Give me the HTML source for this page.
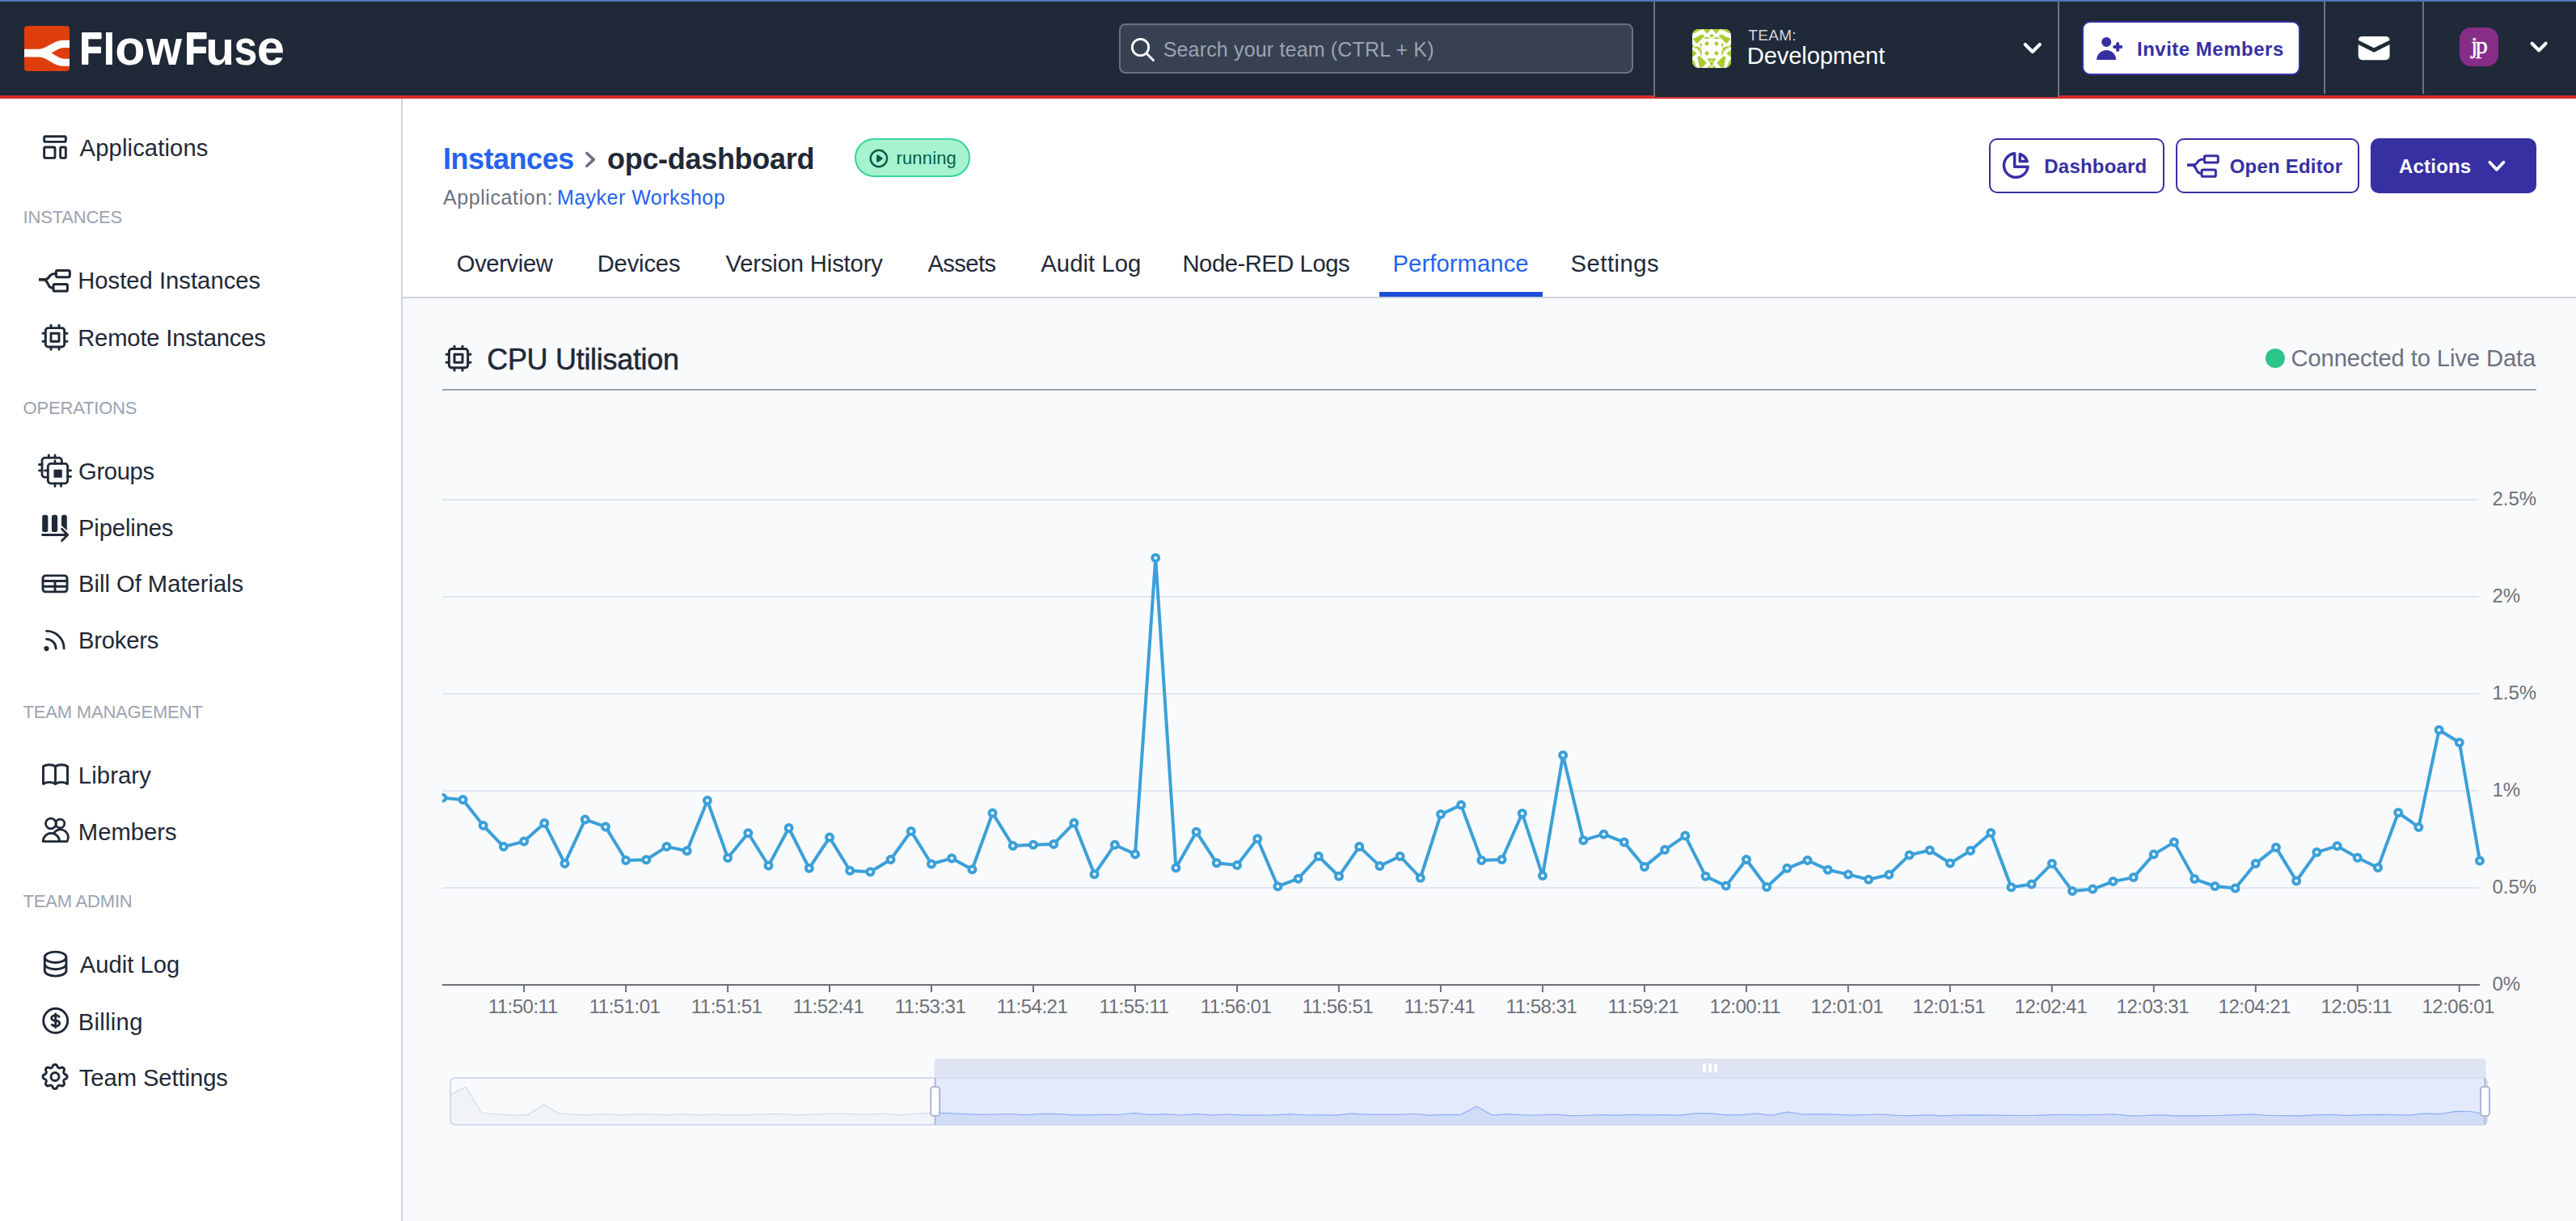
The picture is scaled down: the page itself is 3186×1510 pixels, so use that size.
<!DOCTYPE html>
<html><head><meta charset="utf-8"><title>FlowFuse - opc-dashboard</title>
<style>
html,body{margin:0;padding:0;width:3186px;height:1510px;overflow:hidden;background:#f9fafb;font-family:"Liberation Sans",sans-serif;}
.t{position:absolute;white-space:nowrap;line-height:1;}
.abs{position:absolute;}
svg{position:absolute;left:0;top:0;overflow:visible;}
</style></head><body>
<div class="abs" style="left:0;top:0;width:3186px;height:118px;background:#1f2937"></div>
<div class="abs" style="left:0;top:0;width:3186px;height:2px;background:#4a7db8"></div>
<div class="abs" style="left:0;top:118px;width:3186px;height:4px;background:#d92b2b"></div>
<div class="abs" style="left:0;top:122px;width:496px;height:1388px;background:#ffffff"></div>
<div class="abs" style="left:496px;top:122px;width:2px;height:1388px;background:#d1d5db"></div>
<div class="abs" style="left:498px;top:122px;width:2688px;height:245px;background:#ffffff"></div>
<div class="abs" style="left:498px;top:367px;width:2688px;height:2px;background:#d1d5db"></div>
<div class="abs" style="left:1384px;top:29px;width:636px;height:62px;box-sizing:border-box;background:#374151;border:2px solid #6b7280;border-radius:8px"></div>
<div class="t " style="left:1438.7px;top:48.7px;font-size:25px;color:#9ca3af;font-weight:400;letter-spacing:0.17px;">Search your team (CTRL + K)</div>
<div class="abs" style="left:2047px;top:118px;width:498px;height:2px;background:#1f2937"></div>
<div class="abs" style="left:2045px;top:2px;width:2px;height:118px;background:#6b7280"></div>
<div class="abs" style="left:2545px;top:2px;width:2px;height:118px;background:#6b7280"></div>
<div class="abs" style="left:2874px;top:2px;width:2px;height:114px;background:#6b7280"></div>
<div class="abs" style="left:2996px;top:2px;width:2px;height:114px;background:#6b7280"></div>
<div class="t " style="left:2162.3px;top:33.6px;font-size:19px;color:#d1d5db;font-weight:400;letter-spacing:0.3px;">TEAM:</div>
<div class="t " style="left:2160.8px;top:55.3px;font-size:29.2px;color:#ffffff;font-weight:400;letter-spacing:-0.15px;">Development</div>
<div class="abs" style="left:2575px;top:26px;width:270px;height:67px;box-sizing:border-box;background:#fff;border:2px solid #3730a3;border-radius:10px"></div>
<div class="t " style="left:2643px;top:48.7px;font-size:24px;color:#3730a3;font-weight:700;letter-spacing:0.5px;">Invite Members</div>
<div class="abs" style="left:3042px;top:34px;width:48px;height:48px;background:#862d87;border-radius:14px"></div>
<svg width="3186" height="130" viewBox="0 0 3186 130"><text transform="matrix(0.2863 0 0 0.2899 3056.17 66.32)" font-family="Liberation Serif" font-size="100" fill="#fff" stroke="#fff" stroke-width="1.5">j</text><text transform="matrix(0.3022 0 0 0.2968 3061.87 66.17)" font-family="Liberation Serif" font-size="100" fill="#fff" stroke="#fff" stroke-width="1.5">p</text></svg>
<svg width="3186" height="130" viewBox="0 0 3186 130"><text transform="matrix(0.4457 0 0 0.5512 98.88 79.00)" font-family="Liberation Sans" font-weight="700" font-size="100" fill="#fff" stroke="#fff" stroke-width="4" stroke-linejoin="round">F</text><text transform="matrix(0.5745 0 0 0.5531 126.88 80.10)" font-family="Liberation Sans" font-weight="700" font-size="100" fill="#fff">l</text><text transform="matrix(0.6103 0 0 0.6046 142.36 80.30)" font-family="Liberation Sans" font-weight="700" font-size="100" fill="#fff">o</text><text transform="matrix(0.5687 0 0 0.6104 180.84 80.30)" font-family="Liberation Sans" font-weight="700" font-size="100" fill="#fff">w</text><text transform="matrix(0.4457 0 0 0.5485 228.98 78.80)" font-family="Liberation Sans" font-weight="700" font-size="100" fill="#fff" stroke="#fff" stroke-width="4" stroke-linejoin="round">F</text><text transform="matrix(0.5865 0 0 0.6009 254.33 80.10)" font-family="Liberation Sans" font-weight="700" font-size="100" fill="#fff">u</text><text transform="matrix(0.5188 0 0 0.6027 289.58 80.30)" font-family="Liberation Sans" font-weight="700" font-size="100" fill="#fff">s</text><text transform="matrix(0.6176 0 0 0.6027 317.63 80.30)" font-family="Liberation Sans" font-weight="700" font-size="100" fill="#fff">e</text></svg>
<div class="t " style="left:98.6px;top:168.6px;font-size:29.2px;color:#1f2937;font-weight:400;letter-spacing:0.127px;">Applications</div>
<div class="t " style="left:96.2px;top:333.2px;font-size:29.2px;color:#1f2937;font-weight:400;letter-spacing:0.027px;">Hosted Instances</div>
<div class="t " style="left:96.2px;top:403.9px;font-size:29.2px;color:#1f2937;font-weight:400;letter-spacing:-0.167px;">Remote Instances</div>
<div class="t " style="left:97px;top:568.9px;font-size:29.2px;color:#1f2937;font-weight:400;letter-spacing:-0.32px;">Groups</div>
<div class="t " style="left:97px;top:638.7px;font-size:29.2px;color:#1f2937;font-weight:400;letter-spacing:-0.125px;">Pipelines</div>
<div class="t " style="left:97px;top:708.3px;font-size:29.2px;color:#1f2937;font-weight:400;letter-spacing:-0.012px;">Bill Of Materials</div>
<div class="t " style="left:97px;top:778.2px;font-size:29.2px;color:#1f2937;font-weight:400;letter-spacing:-0.217px;">Brokers</div>
<div class="t " style="left:96.8px;top:944.8px;font-size:29.2px;color:#1f2937;font-weight:400;letter-spacing:0.133px;">Library</div>
<div class="t " style="left:96.8px;top:1014.5px;font-size:29.2px;color:#1f2937;font-weight:400;letter-spacing:0.017px;">Members</div>
<div class="t " style="left:98.8px;top:1179.2px;font-size:29.2px;color:#1f2937;font-weight:400;letter-spacing:0.025px;">Audit Log</div>
<div class="t " style="left:96.8px;top:1250px;font-size:29.2px;color:#1f2937;font-weight:400;letter-spacing:0.283px;">Billing</div>
<div class="t " style="left:97.8px;top:1319.1px;font-size:29.2px;color:#1f2937;font-weight:400;letter-spacing:-0.067px;">Team Settings</div>
<div class="t " style="left:28.6px;top:258.4px;font-size:22px;color:#9ca3af;font-weight:400;letter-spacing:-0.2px;">INSTANCES</div>
<div class="t " style="left:28.6px;top:494px;font-size:22px;color:#9ca3af;font-weight:400;letter-spacing:-0.2px;">OPERATIONS</div>
<div class="t " style="left:28.6px;top:869.7px;font-size:22px;color:#9ca3af;font-weight:400;letter-spacing:-0.2px;">TEAM MANAGEMENT</div>
<div class="t " style="left:28.6px;top:1104.1px;font-size:22px;color:#9ca3af;font-weight:400;letter-spacing:-0.2px;">TEAM ADMIN</div>
<div class="t " style="left:548.1px;top:178.5px;font-size:36px;color:#2563eb;font-weight:700;letter-spacing:-0.5px;">Instances</div>
<div class="t " style="left:751px;top:178.5px;font-size:36px;color:#1f2937;font-weight:700;letter-spacing:-0.3px;">opc-dashboard</div>
<div class="abs" style="left:1057px;top:171px;width:143px;height:48px;box-sizing:border-box;background:#a7f3d0;border:2px solid #34d399;border-radius:24px"></div>
<div class="t " style="left:1108.5px;top:185.3px;font-size:22px;color:#065f46;font-weight:400;letter-spacing:0.15px;">running</div>
<div class="t " style="left:547.9px;top:232.2px;font-size:25px;color:#6b7280;font-weight:400;letter-spacing:0.6px;">Application:</div>
<div class="t " style="left:688.9px;top:232.2px;font-size:25px;color:#2563eb;font-weight:400;letter-spacing:0.48px;">Mayker Workshop</div>
<div class="t " style="left:564.8px;top:311.6px;font-size:29.2px;color:#1f2937;font-weight:400;letter-spacing:-0.371px;">Overview</div>
<div class="t " style="left:738.7px;top:311.6px;font-size:29.2px;color:#1f2937;font-weight:400;letter-spacing:-0.167px;">Devices</div>
<div class="t " style="left:897.5px;top:311.6px;font-size:29.2px;color:#1f2937;font-weight:400;letter-spacing:-0.136px;">Version History</div>
<div class="t " style="left:1147.5px;top:311.6px;font-size:29.2px;color:#1f2937;font-weight:400;letter-spacing:-0.62px;">Assets</div>
<div class="t " style="left:1287.3px;top:311.6px;font-size:29.2px;color:#1f2937;font-weight:400;letter-spacing:0.088px;">Audit Log</div>
<div class="t " style="left:1462.5px;top:311.6px;font-size:29.2px;color:#1f2937;font-weight:400;letter-spacing:-0.458px;">Node-RED Logs</div>
<div class="t " style="left:1722.5px;top:311.6px;font-size:29.2px;color:#2563eb;font-weight:400;letter-spacing:0.1px;">Performance</div>
<div class="t " style="left:1942.6px;top:311.6px;font-size:29.2px;color:#1f2937;font-weight:400;letter-spacing:0.514px;">Settings</div>
<div class="abs" style="left:1706px;top:361px;width:202px;height:6px;background:#1d4ed8"></div>
<div class="abs" style="left:2460px;top:171px;width:217px;height:68px;box-sizing:border-box;background:#fff;border:2px solid #3730a3;border-radius:10px"></div>
<div class="t " style="left:2528.3px;top:193.5px;font-size:24px;color:#3730a3;font-weight:700;letter-spacing:0.2px;">Dashboard</div>
<div class="abs" style="left:2691px;top:171px;width:227px;height:68px;box-sizing:border-box;background:#fff;border:2px solid #3730a3;border-radius:10px"></div>
<div class="t " style="left:2757.7px;top:193.5px;font-size:24px;color:#3730a3;font-weight:700;letter-spacing:0.2px;">Open Editor</div>
<div class="abs" style="left:2932px;top:171px;width:205px;height:68px;box-sizing:border-box;background:#3730a3;border-radius:10px"></div>
<div class="t " style="left:2967px;top:193.5px;font-size:24px;color:#ffffff;font-weight:700;letter-spacing:0.2px;">Actions</div>
<div class="t " style="left:602.2px;top:426.5px;font-size:36px;color:#1f2937;font-weight:400;letter-spacing:-0.3px;-webkit-text-stroke:0.5px #1f2937;">CPU Utilisation</div>
<div class="t " style="left:2833.5px;top:428.7px;font-size:29.2px;color:#6b7280;font-weight:400;letter-spacing:-0.11px;">Connected to Live Data</div>
<div class="abs" style="left:2802px;top:431px;width:24px;height:24px;border-radius:12px;background:#2cc48b"></div>
<div class="abs" style="left:547px;top:481px;width:2590px;height:2px;background:#9ca3af"></div>
<svg width="3186" height="1510" viewBox="0 0 3186 1510">
<g transform="translate(30,32)"><rect width="56" height="56" rx="4" fill="#dd3e0b"/><path d="M0 28.7 L17.8 28.7 C27 28.7 37 17.8 47.4 17.8 L56 17.8 L56 26.9 L49.2 26.9 C42 26.9 36 33.6 31.9 33.6 C36 33.6 42 40.7 49.2 40.7 L56 40.7 L56 49.8 L47.4 49.8 C37 49.8 27 38.6 18.4 38.6 L0 38.6 Z" fill="#fff"/></g>
<g transform="translate(1396,44) scale(1.45)" fill="none" stroke="#fff" stroke-width="2" stroke-linecap="round" stroke-linejoin="round"><path d="M21 21l-6-6m2-5a7 7 0 11-14 0 7 7 0 0114 0z"/></g>
<g transform="translate(2093,36)"><clipPath id="tc"><rect width="48" height="48" rx="8"/></clipPath><g clip-path="url(#tc)"><rect width="48" height="48" fill="#fff"/><path fill="#a9cc33" d="M13.3 0.0 L23.5 0.0 L18.2 5.8 Z M34.7 0.0 L24.5 0.0 L29.8 5.8 Z M0.5 12.2 L12.0 6.5 L15.5 8.6 L5.8 18.0 Z M47.5 12.2 L36.0 6.5 L32.5 8.6 L42.2 18.0 Z M20.8 8.3 L24.0 6.0 L24.0 10.6 Z M27.2 8.3 L24.0 6.0 L24.0 10.6 Z M13.5 12.0 L18.0 9.2 L22.3 12.0 Z M34.5 12.0 L30.0 9.2 L25.7 12.0 Z M0.0 18.4 L3.5 21.9 L0.0 22.5 Z M48.0 18.4 L44.5 21.9 L48.0 22.5 Z M8.8 18.1 L11.7 18.1 L11.7 23.7 Z M39.2 18.1 L36.3 18.1 L36.3 23.7 Z M1.2 23.2 L5.7 21.2 L11.0 23.7 L8.2 27.6 L6.0 24.0 Z M46.8 23.2 L42.3 21.2 L37.0 23.7 L39.8 27.6 L42.0 24.0 Z M0.0 25.4 L5.7 29.9 L0.0 34.7 Z M48.0 25.4 L42.3 29.9 L48.0 34.7 Z M9.3 25.2 L11.7 26.0 L11.7 33.6 L9.6 30.0 Z M38.7 25.2 L36.3 26.0 L36.3 33.6 L38.4 30.0 Z M6.4 34.7 L9.0 33.0 L17.9 41.8 L12.5 47.5 L9.0 47.5 Z M41.6 34.7 L39.0 33.0 L30.1 41.8 L35.5 47.5 L39.0 47.5 Z M0.0 37.0 L2.5 40.0 L5.5 47.8 L0.0 47.8 Z M48.0 37.0 L45.5 40.0 L42.5 47.8 L48.0 47.8 Z M18.4 36.3 L24.0 36.3 L24.0 39.6 L22.0 41.5 Z M29.6 36.3 L24.0 36.3 L24.0 39.6 L26.0 41.5 Z M24.0 38.0 L26.8 42.1 L24.0 46.2 Z M24.0 38.0 L21.2 42.1 L24.0 46.2 Z M18.5 47.8 L21.2 44.5 L24.0 47.8 Z M29.5 47.8 L26.8 44.5 L24.0 47.8 Z M0.0 0.0 L13.0 0.0 L0.0 6.0 Z M48.0 0.0 L35.0 0.0 L48.0 6.0 Z"/><path fill="#a9cc33" d="M18 14.9 L21.1 18 L18 21.1 L14.9 18 Z"/><path fill="#a9cc33" d="M29.9 14.9 L33.0 18 L29.9 21.1 L26.799999999999997 18 Z"/><path fill="#a9cc33" d="M18 26.799999999999997 L21.1 29.9 L18 33.0 L14.9 29.9 Z"/><path fill="#a9cc33" d="M29.9 26.799999999999997 L33.0 29.9 L29.9 33.0 L26.799999999999997 29.9 Z"/></g></g>
<path d="M2504.8 55.1 L2513.8 64.1 L2522.8 55.1" fill="none" stroke="#fff" stroke-width="4.2" stroke-linecap="round" stroke-linejoin="round"/>
<path d="M3131.6 53.8 L3140.1 62.2 L3148.6 53.8" fill="none" stroke="#fff" stroke-width="4.2" stroke-linecap="round" stroke-linejoin="round"/>
<g transform="translate(2589.2,39.9) scale(2.0)" fill="#3730a3"><path d="M8 9a3 3 0 100-6 3 3 0 000 6zM8 11a6 6 0 016 6H2a6 6 0 016-6zM16 7a1 1 0 10-2 0v1h-1a1 1 0 100 2h1v1a1 1 0 102 0v-1h1a1 1 0 100-2h-1V7z"/></g>
<g transform="translate(2911.9,35.4) scale(2.425)" fill="#fff"><path d="M2.003 5.884L10 9.882l7.997-3.998A2 2 0 0016 4H4a2 2 0 00-1.997 1.884z"/><path d="M18 8.118l-8 4-8-4V14a2 2 0 002 2h12a2 2 0 002-2V8.118z"/></g>
<g transform="translate(48,162) scale(1.667)" fill="none" stroke="#1f2937" stroke-width="1.75" stroke-linecap="round" stroke-linejoin="round"><path d="M4 5a1 1 0 011-1h14a1 1 0 011 1v2a1 1 0 01-1 1H5a1 1 0 01-1-1V5zM4 13a1 1 0 011-1h6a1 1 0 011 1v6a1 1 0 01-1 1H5a1 1 0 01-1-1v-6zM16 13a1 1 0 011-1h2a1 1 0 011 1v6a1 1 0 01-1 1h-2a1 1 0 01-1-1v-6z"/></g>
<g transform="translate(48,397.3) scale(1.667)" fill="none" stroke="#1f2937" stroke-width="1.75" stroke-linecap="round" stroke-linejoin="round"><path d="M9 3v2m6-2v2M9 19v2m6-2v2M5 9H3m2 6H3m18-6h-2m2 6h-2M7 19h10a2 2 0 002-2V7a2 2 0 00-2-2H7a2 2 0 00-2 2v10a2 2 0 002 2zM9 9h6v6H9V9z"/></g>
<g transform="translate(48,701.9) scale(1.667)" fill="none" stroke="#1f2937" stroke-width="1.75" stroke-linecap="round" stroke-linejoin="round"><path d="M3 10h18M3 14h18m-9-4v8m-7 0h14a2 2 0 002-2V8a2 2 0 00-2-2H5a2 2 0 00-2 2v8a2 2 0 002 2z"/></g>
<g transform="translate(47.5,772) scale(1.667)" fill="none" stroke="#1f2937" stroke-width="1.75" stroke-linecap="round" stroke-linejoin="round"><path d="M6 5c7.18 0 13 5.82 13 13M6 11a7 7 0 017 7m-6 0a1 1 0 11-2 0 1 1 0 012 0z"/></g>
<g transform="translate(48.5,937.4) scale(1.667)" fill="none" stroke="#1f2937" stroke-width="1.75" stroke-linecap="round" stroke-linejoin="round"><path d="M12 6.253v13m0-13C10.832 5.477 9.246 5 7.5 5S4.168 5.477 3 6.253v13C4.168 18.477 5.754 18 7.5 18s3.332.477 4.5 1.253m0-13C13.168 5.477 14.754 5 16.5 5c1.747 0 3.332.477 4.5 1.253v13C19.832 18.477 18.247 18 16.5 18c-1.746 0-3.332.477-4.5 1.253"/></g>
<g transform="translate(48.6,1172.1) scale(1.667)" fill="none" stroke="#1f2937" stroke-width="1.75" stroke-linecap="round" stroke-linejoin="round"><path d="M4 7v10c0 2.21 3.582 4 8 4s8-1.79 8-4V7M4 7c0 2.21 3.582 4 8 4s8-1.79 8-4M4 7c0-2.21 3.582-4 8-4s8 1.79 8 4m0 5c0 2.21-3.582 4-8 4s-8-1.79-8-4"/></g>
<g transform="translate(48.7,1242.3) scale(1.667)" fill="none" stroke="#1f2937" stroke-width="1.75" stroke-linecap="round" stroke-linejoin="round"><path d="M12 8c-1.657 0-3 .895-3 2s1.343 2 3 2 3 .895 3 2-1.343 2-3 2m0-8c1.11 0 2.08.402 2.599 1M12 8V7m0 1v8m0 0v1m0-1c-1.11 0-2.08-.402-2.599-1M21 12a9 9 0 11-18 0 9 9 0 0118 0z"/></g>
<g transform="translate(48,1311.5) scale(1.667)" fill="none" stroke="#1f2937" stroke-width="1.75" stroke-linecap="round" stroke-linejoin="round"><path d="M10.325 4.317c.426-1.756 2.924-1.756 3.35 0a1.724 1.724 0 002.573 1.066c1.543-.94 3.31.826 2.37 2.37a1.724 1.724 0 001.065 2.572c1.756.426 1.756 2.924 0 3.35a1.724 1.724 0 00-1.066 2.573c.94 1.543-.826 3.31-2.37 2.37a1.724 1.724 0 00-2.572 1.065c-.426 1.756-2.924 1.756-3.35 0a1.724 1.724 0 00-2.573-1.066c-1.543.94-3.31-.826-2.37-2.37a1.724 1.724 0 00-1.065-2.572c-1.756-.426-1.756-2.924 0-3.35a1.724 1.724 0 001.066-2.573c-.94-1.543.826-3.31 2.37-2.37.996.608 2.296.07 2.572-1.065zM15 12a3 3 0 11-6 0 3 3 0 016 0z"/></g>
<g transform="translate(48,333) scale(1.0)" fill="none" stroke="#1f2937" stroke-width="3" stroke-linejoin="round"><path d="M0 12.8 H8.6" stroke-width="3.6"/><path d="M8 12.6 C11.5 12.6 12.5 9.2 14.5 7.3 C16 5.9 17.5 5.6 20.5 5.6"/><path d="M7.2 13.2 C10.2 14 11 18 12.6 20.6 C13.6 22.3 15 23 17.5 23"/><rect x="21.4" y="1.5" width="16.9" height="8.2" rx="1.6"/><rect x="18.1" y="18.6" width="17.3" height="8.4" rx="1.6"/></g>
<g fill="none" stroke="#1f2937" stroke-width="2.8" stroke-linecap="round" stroke-linejoin="round"><path d="M59.3 590.2 H55.5 a3.5 3.5 0 0 1 -3.5 -3.5 V569.6 a3.5 3.5 0 0 1 3.5 -3.5 H72.9 a3.5 3.5 0 0 1 3.5 3.5 V573.4"/><path d="M60.3 563 v3 M68 563 v3 M48.5 574.5 h3.5 M48.5 581.9 h3.5 M55.5 581.9 h3.8"/><rect x="59.3" y="573.4" width="24.4" height="24.4" rx="3.5"/><path d="M68 570 v3.4 M68 597.8 v3.6 M75.5 597.8 v3.6 M83.7 581.9 h3.8 M83.7 589.4 h3.8"/></g><rect x="66.5" y="580.7" width="10.3" height="10" fill="#1f2937"/>
<g fill="#1f2937"><rect x="52.2" y="636.8" width="7.2" height="21.1" rx="2.5"/><rect x="63.9" y="636.8" width="7.2" height="21.1" rx="2.5"/><path d="M78.5 636.8 h1.8 a2.5 2.5 0 0 1 2.5 2.5 V656 L76 650 V639.3 a2.5 2.5 0 0 1 2.5 -2.5z"/></g><path d="M52.5 661.5 H83.5 M76.5 654.3 L83.7 661.5 L76.5 668.7" fill="none" stroke="#1f2937" stroke-width="2.8" stroke-linecap="round" stroke-linejoin="round"/>
<g fill="none" stroke="#1f2937" stroke-width="2.8" stroke-linejoin="round"><circle cx="62.9" cy="1018.5" r="6.4"/><circle cx="74.4" cy="1018.5" r="5.4"/><path d="M53.2 1040.6 a10.2 10.2 0 0 1 20.4 0 Z"/><path d="M66.6 1030.5 a9 9 0 0 1 16.4 10.1 H73.6"/></g>
<g transform="translate(2473.5,184.7) scale(1.65)" fill="none" stroke="#3730a3" stroke-width="2.1" stroke-linecap="round" stroke-linejoin="round"><path d="M11 3.055A9.001 9.001 0 1020.945 13H11V3.055z M20.488 9H15V3.512A9.025 9.025 0 0120.488 9z"/></g>
<g transform="translate(2705,191.3) scale(1.0)" fill="none" stroke="#3730a3" stroke-width="3" stroke-linejoin="round"><path d="M0 12.8 H8.6" stroke-width="3.6"/><path d="M8 12.6 C11.5 12.6 12.5 9.2 14.5 7.3 C16 5.9 17.5 5.6 20.5 5.6"/><path d="M7.2 13.2 C10.2 14 11 18 12.6 20.6 C13.6 22.3 15 23 17.5 23"/><rect x="21.4" y="1.5" width="16.9" height="8.2" rx="1.6"/><rect x="18.1" y="18.6" width="17.3" height="8.4" rx="1.6"/></g>
<path d="M3079.4 200.7 L3087.9 209.7 L3096.4 200.7" fill="none" stroke="#fff" stroke-width="3.8" stroke-linecap="round" stroke-linejoin="round"/>
<g fill="none" stroke="#065f46" stroke-width="2.4" stroke-linecap="round" stroke-linejoin="round"><circle cx="1086.9" cy="196" r="10.2"/><path d="M1085.3 192.6 L1090.6 196.1 L1085.3 199.6 Z" fill="#065f46"/></g>
<path d="M725.8 189.5 L734.3 197.4 L725.8 205.3" fill="none" stroke="#6b7280" stroke-width="3.6" stroke-linecap="round" stroke-linejoin="round"/>
<g transform="translate(547.1,423.3) scale(1.66)" fill="none" stroke="#1f2937" stroke-width="1.8" stroke-linecap="round" stroke-linejoin="round"><path d="M9 3v2m6-2v2M9 19v2m6-2v2M5 9H3m2 6H3m18-6h-2m2 6h-2M7 19h10a2 2 0 002-2V7a2 2 0 00-2-2H7a2 2 0 00-2 2v10a2 2 0 002 2zM9 9h6v6H9V9z"/></g>
<rect x="547" y="1097" width="2519" height="2" fill="#e0e6f1"/>
<text x="3082.5" y="1105.3" font-size="24" fill="#6e7079" font-family="Liberation Sans">0.5%</text>
<rect x="547" y="977" width="2519" height="2" fill="#e0e6f1"/>
<text x="3082.5" y="985.3" font-size="24" fill="#6e7079" font-family="Liberation Sans">1%</text>
<rect x="547" y="857" width="2519" height="2" fill="#e0e6f1"/>
<text x="3082.5" y="865.3" font-size="24" fill="#6e7079" font-family="Liberation Sans">1.5%</text>
<rect x="547" y="737" width="2519" height="2" fill="#e0e6f1"/>
<text x="3082.5" y="745.3" font-size="24" fill="#6e7079" font-family="Liberation Sans">2%</text>
<rect x="547" y="617" width="2519" height="2" fill="#e0e6f1"/>
<text x="3082.5" y="625.3" font-size="24" fill="#6e7079" font-family="Liberation Sans">2.5%</text>
<text x="3082.5" y="1225.3" font-size="24" fill="#6e7079" font-family="Liberation Sans">0%</text>
<rect x="547" y="1217" width="2520" height="2" fill="#6e7079"/>
<rect x="647.1" y="1217" width="2" height="10" fill="#6e7079"/>
<text x="646.6" y="1253" font-size="24" fill="#6e7079" text-anchor="middle" letter-spacing="-0.5" font-family="Liberation Sans">11:50:11</text>
<rect x="773.1" y="1217" width="2" height="10" fill="#6e7079"/>
<text x="772.6" y="1253" font-size="24" fill="#6e7079" text-anchor="middle" letter-spacing="-0.5" font-family="Liberation Sans">11:51:01</text>
<rect x="899.1" y="1217" width="2" height="10" fill="#6e7079"/>
<text x="898.6" y="1253" font-size="24" fill="#6e7079" text-anchor="middle" letter-spacing="-0.5" font-family="Liberation Sans">11:51:51</text>
<rect x="1025" y="1217" width="2" height="10" fill="#6e7079"/>
<text x="1024.5" y="1253" font-size="24" fill="#6e7079" text-anchor="middle" letter-spacing="-0.5" font-family="Liberation Sans">11:52:41</text>
<rect x="1151" y="1217" width="2" height="10" fill="#6e7079"/>
<text x="1150.5" y="1253" font-size="24" fill="#6e7079" text-anchor="middle" letter-spacing="-0.5" font-family="Liberation Sans">11:53:31</text>
<rect x="1277" y="1217" width="2" height="10" fill="#6e7079"/>
<text x="1276.5" y="1253" font-size="24" fill="#6e7079" text-anchor="middle" letter-spacing="-0.5" font-family="Liberation Sans">11:54:21</text>
<rect x="1403" y="1217" width="2" height="10" fill="#6e7079"/>
<text x="1402.5" y="1253" font-size="24" fill="#6e7079" text-anchor="middle" letter-spacing="-0.5" font-family="Liberation Sans">11:55:11</text>
<rect x="1529" y="1217" width="2" height="10" fill="#6e7079"/>
<text x="1528.5" y="1253" font-size="24" fill="#6e7079" text-anchor="middle" letter-spacing="-0.5" font-family="Liberation Sans">11:56:01</text>
<rect x="1654.9" y="1217" width="2" height="10" fill="#6e7079"/>
<text x="1654.4" y="1253" font-size="24" fill="#6e7079" text-anchor="middle" letter-spacing="-0.5" font-family="Liberation Sans">11:56:51</text>
<rect x="1780.9" y="1217" width="2" height="10" fill="#6e7079"/>
<text x="1780.4" y="1253" font-size="24" fill="#6e7079" text-anchor="middle" letter-spacing="-0.5" font-family="Liberation Sans">11:57:41</text>
<rect x="1906.9" y="1217" width="2" height="10" fill="#6e7079"/>
<text x="1906.4" y="1253" font-size="24" fill="#6e7079" text-anchor="middle" letter-spacing="-0.5" font-family="Liberation Sans">11:58:31</text>
<rect x="2032.9" y="1217" width="2" height="10" fill="#6e7079"/>
<text x="2032.4" y="1253" font-size="24" fill="#6e7079" text-anchor="middle" letter-spacing="-0.5" font-family="Liberation Sans">11:59:21</text>
<rect x="2158.9" y="1217" width="2" height="10" fill="#6e7079"/>
<text x="2158.4" y="1253" font-size="24" fill="#6e7079" text-anchor="middle" letter-spacing="-0.5" font-family="Liberation Sans">12:00:11</text>
<rect x="2284.8" y="1217" width="2" height="10" fill="#6e7079"/>
<text x="2284.3" y="1253" font-size="24" fill="#6e7079" text-anchor="middle" letter-spacing="-0.5" font-family="Liberation Sans">12:01:01</text>
<rect x="2410.8" y="1217" width="2" height="10" fill="#6e7079"/>
<text x="2410.3" y="1253" font-size="24" fill="#6e7079" text-anchor="middle" letter-spacing="-0.5" font-family="Liberation Sans">12:01:51</text>
<rect x="2536.8" y="1217" width="2" height="10" fill="#6e7079"/>
<text x="2536.3" y="1253" font-size="24" fill="#6e7079" text-anchor="middle" letter-spacing="-0.5" font-family="Liberation Sans">12:02:41</text>
<rect x="2662.8" y="1217" width="2" height="10" fill="#6e7079"/>
<text x="2662.3" y="1253" font-size="24" fill="#6e7079" text-anchor="middle" letter-spacing="-0.5" font-family="Liberation Sans">12:03:31</text>
<rect x="2788.8" y="1217" width="2" height="10" fill="#6e7079"/>
<text x="2788.3" y="1253" font-size="24" fill="#6e7079" text-anchor="middle" letter-spacing="-0.5" font-family="Liberation Sans">12:04:21</text>
<rect x="2914.7" y="1217" width="2" height="10" fill="#6e7079"/>
<text x="2914.2" y="1253" font-size="24" fill="#6e7079" text-anchor="middle" letter-spacing="-0.5" font-family="Liberation Sans">12:05:11</text>
<rect x="3040.7" y="1217" width="2" height="10" fill="#6e7079"/>
<text x="3040.2" y="1253" font-size="24" fill="#6e7079" text-anchor="middle" letter-spacing="-0.5" font-family="Liberation Sans">12:06:01</text>
<clipPath id="plot"><rect x="547" y="560" width="2529" height="680"/></clipPath>
<g clip-path="url(#plot)"><polyline points="547.3,986.7 572.5,989.1 597.7,1021 622.9,1047.1 648.1,1040.6 673.3,1018 698.5,1067.9 723.7,1013.5 748.9,1022.4 774.1,1063.9 799.3,1063.3 824.5,1047.1 849.7,1052.3 874.9,990.1 900.1,1061 925.3,1030.3 950.5,1070.5 975.6,1024 1000.8,1073.8 1026,1035.6 1051.2,1076.8 1076.4,1078.2 1101.6,1063 1126.8,1027.9 1152,1068.5 1177.2,1061.4 1202.4,1075.2 1227.6,1005.5 1252.8,1046.1 1278,1044.7 1303.2,1043.9 1328.4,1017.8 1353.6,1081.2 1378.8,1044.7 1404,1056.4 1429.2,690.1 1454.4,1073.2 1479.6,1028.7 1504.8,1067.3 1530,1069.9 1555.2,1037.2 1580.4,1096.2 1605.6,1086.7 1630.8,1059 1656,1083.7 1681.2,1047.1 1706.4,1070.9 1731.6,1059 1756.8,1085.7 1782,1007.1 1807.1,995.6 1832.3,1063.9 1857.5,1063 1882.7,1005.9 1907.9,1083.1 1933.1,934 1958.3,1039.2 1983.5,1031.7 2008.7,1041.6 2033.9,1071.9 2059.1,1051.1 2084.3,1033.6 2109.5,1083.7 2134.7,1095.6 2159.9,1063 2185.1,1097 2210.3,1073.8 2235.5,1063.9 2260.7,1075.8 2285.9,1081.4 2311.1,1087.7 2336.3,1081.8 2361.5,1057.4 2386.7,1051.5 2411.9,1067.5 2437.1,1052.1 2462.3,1030 2487.5,1097.3 2512.7,1093.6 2537.9,1067.9 2563.1,1102 2588.3,1099.6 2613.5,1090.1 2638.7,1085.1 2663.8,1056.6 2689,1041.6 2714.2,1087.1 2739.4,1096 2764.6,1098.6 2789.8,1067.9 2815,1048.1 2840.2,1089.5 2865.4,1054.1 2890.6,1046.2 2915.8,1060.8 2941,1073 2966.2,1005 2991.4,1022.9 3016.6,902.8 3041.8,918.2 3067,1064.6" fill="none" stroke="#3ba0d9" stroke-width="4" stroke-linejoin="round"/>
<circle cx="547.3" cy="986.7" r="4" fill="#fff" stroke="#3ba0d9" stroke-width="4"/><circle cx="572.5" cy="989.1" r="4" fill="#fff" stroke="#3ba0d9" stroke-width="4"/><circle cx="597.7" cy="1021" r="4" fill="#fff" stroke="#3ba0d9" stroke-width="4"/><circle cx="622.9" cy="1047.1" r="4" fill="#fff" stroke="#3ba0d9" stroke-width="4"/><circle cx="648.1" cy="1040.6" r="4" fill="#fff" stroke="#3ba0d9" stroke-width="4"/><circle cx="673.3" cy="1018" r="4" fill="#fff" stroke="#3ba0d9" stroke-width="4"/><circle cx="698.5" cy="1067.9" r="4" fill="#fff" stroke="#3ba0d9" stroke-width="4"/><circle cx="723.7" cy="1013.5" r="4" fill="#fff" stroke="#3ba0d9" stroke-width="4"/><circle cx="748.9" cy="1022.4" r="4" fill="#fff" stroke="#3ba0d9" stroke-width="4"/><circle cx="774.1" cy="1063.9" r="4" fill="#fff" stroke="#3ba0d9" stroke-width="4"/><circle cx="799.3" cy="1063.3" r="4" fill="#fff" stroke="#3ba0d9" stroke-width="4"/><circle cx="824.5" cy="1047.1" r="4" fill="#fff" stroke="#3ba0d9" stroke-width="4"/><circle cx="849.7" cy="1052.3" r="4" fill="#fff" stroke="#3ba0d9" stroke-width="4"/><circle cx="874.9" cy="990.1" r="4" fill="#fff" stroke="#3ba0d9" stroke-width="4"/><circle cx="900.1" cy="1061" r="4" fill="#fff" stroke="#3ba0d9" stroke-width="4"/><circle cx="925.3" cy="1030.3" r="4" fill="#fff" stroke="#3ba0d9" stroke-width="4"/><circle cx="950.5" cy="1070.5" r="4" fill="#fff" stroke="#3ba0d9" stroke-width="4"/><circle cx="975.6" cy="1024" r="4" fill="#fff" stroke="#3ba0d9" stroke-width="4"/><circle cx="1000.8" cy="1073.8" r="4" fill="#fff" stroke="#3ba0d9" stroke-width="4"/><circle cx="1026" cy="1035.6" r="4" fill="#fff" stroke="#3ba0d9" stroke-width="4"/><circle cx="1051.2" cy="1076.8" r="4" fill="#fff" stroke="#3ba0d9" stroke-width="4"/><circle cx="1076.4" cy="1078.2" r="4" fill="#fff" stroke="#3ba0d9" stroke-width="4"/><circle cx="1101.6" cy="1063" r="4" fill="#fff" stroke="#3ba0d9" stroke-width="4"/><circle cx="1126.8" cy="1027.9" r="4" fill="#fff" stroke="#3ba0d9" stroke-width="4"/><circle cx="1152" cy="1068.5" r="4" fill="#fff" stroke="#3ba0d9" stroke-width="4"/><circle cx="1177.2" cy="1061.4" r="4" fill="#fff" stroke="#3ba0d9" stroke-width="4"/><circle cx="1202.4" cy="1075.2" r="4" fill="#fff" stroke="#3ba0d9" stroke-width="4"/><circle cx="1227.6" cy="1005.5" r="4" fill="#fff" stroke="#3ba0d9" stroke-width="4"/><circle cx="1252.8" cy="1046.1" r="4" fill="#fff" stroke="#3ba0d9" stroke-width="4"/><circle cx="1278" cy="1044.7" r="4" fill="#fff" stroke="#3ba0d9" stroke-width="4"/><circle cx="1303.2" cy="1043.9" r="4" fill="#fff" stroke="#3ba0d9" stroke-width="4"/><circle cx="1328.4" cy="1017.8" r="4" fill="#fff" stroke="#3ba0d9" stroke-width="4"/><circle cx="1353.6" cy="1081.2" r="4" fill="#fff" stroke="#3ba0d9" stroke-width="4"/><circle cx="1378.8" cy="1044.7" r="4" fill="#fff" stroke="#3ba0d9" stroke-width="4"/><circle cx="1404" cy="1056.4" r="4" fill="#fff" stroke="#3ba0d9" stroke-width="4"/><circle cx="1429.2" cy="690.1" r="4" fill="#fff" stroke="#3ba0d9" stroke-width="4"/><circle cx="1454.4" cy="1073.2" r="4" fill="#fff" stroke="#3ba0d9" stroke-width="4"/><circle cx="1479.6" cy="1028.7" r="4" fill="#fff" stroke="#3ba0d9" stroke-width="4"/><circle cx="1504.8" cy="1067.3" r="4" fill="#fff" stroke="#3ba0d9" stroke-width="4"/><circle cx="1530" cy="1069.9" r="4" fill="#fff" stroke="#3ba0d9" stroke-width="4"/><circle cx="1555.2" cy="1037.2" r="4" fill="#fff" stroke="#3ba0d9" stroke-width="4"/><circle cx="1580.4" cy="1096.2" r="4" fill="#fff" stroke="#3ba0d9" stroke-width="4"/><circle cx="1605.6" cy="1086.7" r="4" fill="#fff" stroke="#3ba0d9" stroke-width="4"/><circle cx="1630.8" cy="1059" r="4" fill="#fff" stroke="#3ba0d9" stroke-width="4"/><circle cx="1656" cy="1083.7" r="4" fill="#fff" stroke="#3ba0d9" stroke-width="4"/><circle cx="1681.2" cy="1047.1" r="4" fill="#fff" stroke="#3ba0d9" stroke-width="4"/><circle cx="1706.4" cy="1070.9" r="4" fill="#fff" stroke="#3ba0d9" stroke-width="4"/><circle cx="1731.6" cy="1059" r="4" fill="#fff" stroke="#3ba0d9" stroke-width="4"/><circle cx="1756.8" cy="1085.7" r="4" fill="#fff" stroke="#3ba0d9" stroke-width="4"/><circle cx="1782" cy="1007.1" r="4" fill="#fff" stroke="#3ba0d9" stroke-width="4"/><circle cx="1807.1" cy="995.6" r="4" fill="#fff" stroke="#3ba0d9" stroke-width="4"/><circle cx="1832.3" cy="1063.9" r="4" fill="#fff" stroke="#3ba0d9" stroke-width="4"/><circle cx="1857.5" cy="1063" r="4" fill="#fff" stroke="#3ba0d9" stroke-width="4"/><circle cx="1882.7" cy="1005.9" r="4" fill="#fff" stroke="#3ba0d9" stroke-width="4"/><circle cx="1907.9" cy="1083.1" r="4" fill="#fff" stroke="#3ba0d9" stroke-width="4"/><circle cx="1933.1" cy="934" r="4" fill="#fff" stroke="#3ba0d9" stroke-width="4"/><circle cx="1958.3" cy="1039.2" r="4" fill="#fff" stroke="#3ba0d9" stroke-width="4"/><circle cx="1983.5" cy="1031.7" r="4" fill="#fff" stroke="#3ba0d9" stroke-width="4"/><circle cx="2008.7" cy="1041.6" r="4" fill="#fff" stroke="#3ba0d9" stroke-width="4"/><circle cx="2033.9" cy="1071.9" r="4" fill="#fff" stroke="#3ba0d9" stroke-width="4"/><circle cx="2059.1" cy="1051.1" r="4" fill="#fff" stroke="#3ba0d9" stroke-width="4"/><circle cx="2084.3" cy="1033.6" r="4" fill="#fff" stroke="#3ba0d9" stroke-width="4"/><circle cx="2109.5" cy="1083.7" r="4" fill="#fff" stroke="#3ba0d9" stroke-width="4"/><circle cx="2134.7" cy="1095.6" r="4" fill="#fff" stroke="#3ba0d9" stroke-width="4"/><circle cx="2159.9" cy="1063" r="4" fill="#fff" stroke="#3ba0d9" stroke-width="4"/><circle cx="2185.1" cy="1097" r="4" fill="#fff" stroke="#3ba0d9" stroke-width="4"/><circle cx="2210.3" cy="1073.8" r="4" fill="#fff" stroke="#3ba0d9" stroke-width="4"/><circle cx="2235.5" cy="1063.9" r="4" fill="#fff" stroke="#3ba0d9" stroke-width="4"/><circle cx="2260.7" cy="1075.8" r="4" fill="#fff" stroke="#3ba0d9" stroke-width="4"/><circle cx="2285.9" cy="1081.4" r="4" fill="#fff" stroke="#3ba0d9" stroke-width="4"/><circle cx="2311.1" cy="1087.7" r="4" fill="#fff" stroke="#3ba0d9" stroke-width="4"/><circle cx="2336.3" cy="1081.8" r="4" fill="#fff" stroke="#3ba0d9" stroke-width="4"/><circle cx="2361.5" cy="1057.4" r="4" fill="#fff" stroke="#3ba0d9" stroke-width="4"/><circle cx="2386.7" cy="1051.5" r="4" fill="#fff" stroke="#3ba0d9" stroke-width="4"/><circle cx="2411.9" cy="1067.5" r="4" fill="#fff" stroke="#3ba0d9" stroke-width="4"/><circle cx="2437.1" cy="1052.1" r="4" fill="#fff" stroke="#3ba0d9" stroke-width="4"/><circle cx="2462.3" cy="1030" r="4" fill="#fff" stroke="#3ba0d9" stroke-width="4"/><circle cx="2487.5" cy="1097.3" r="4" fill="#fff" stroke="#3ba0d9" stroke-width="4"/><circle cx="2512.7" cy="1093.6" r="4" fill="#fff" stroke="#3ba0d9" stroke-width="4"/><circle cx="2537.9" cy="1067.9" r="4" fill="#fff" stroke="#3ba0d9" stroke-width="4"/><circle cx="2563.1" cy="1102" r="4" fill="#fff" stroke="#3ba0d9" stroke-width="4"/><circle cx="2588.3" cy="1099.6" r="4" fill="#fff" stroke="#3ba0d9" stroke-width="4"/><circle cx="2613.5" cy="1090.1" r="4" fill="#fff" stroke="#3ba0d9" stroke-width="4"/><circle cx="2638.7" cy="1085.1" r="4" fill="#fff" stroke="#3ba0d9" stroke-width="4"/><circle cx="2663.8" cy="1056.6" r="4" fill="#fff" stroke="#3ba0d9" stroke-width="4"/><circle cx="2689" cy="1041.6" r="4" fill="#fff" stroke="#3ba0d9" stroke-width="4"/><circle cx="2714.2" cy="1087.1" r="4" fill="#fff" stroke="#3ba0d9" stroke-width="4"/><circle cx="2739.4" cy="1096" r="4" fill="#fff" stroke="#3ba0d9" stroke-width="4"/><circle cx="2764.6" cy="1098.6" r="4" fill="#fff" stroke="#3ba0d9" stroke-width="4"/><circle cx="2789.8" cy="1067.9" r="4" fill="#fff" stroke="#3ba0d9" stroke-width="4"/><circle cx="2815" cy="1048.1" r="4" fill="#fff" stroke="#3ba0d9" stroke-width="4"/><circle cx="2840.2" cy="1089.5" r="4" fill="#fff" stroke="#3ba0d9" stroke-width="4"/><circle cx="2865.4" cy="1054.1" r="4" fill="#fff" stroke="#3ba0d9" stroke-width="4"/><circle cx="2890.6" cy="1046.2" r="4" fill="#fff" stroke="#3ba0d9" stroke-width="4"/><circle cx="2915.8" cy="1060.8" r="4" fill="#fff" stroke="#3ba0d9" stroke-width="4"/><circle cx="2941" cy="1073" r="4" fill="#fff" stroke="#3ba0d9" stroke-width="4"/><circle cx="2966.2" cy="1005" r="4" fill="#fff" stroke="#3ba0d9" stroke-width="4"/><circle cx="2991.4" cy="1022.9" r="4" fill="#fff" stroke="#3ba0d9" stroke-width="4"/><circle cx="3016.6" cy="902.8" r="4" fill="#fff" stroke="#3ba0d9" stroke-width="4"/><circle cx="3041.8" cy="918.2" r="4" fill="#fff" stroke="#3ba0d9" stroke-width="4"/><circle cx="3067" cy="1064.6" r="4" fill="#fff" stroke="#3ba0d9" stroke-width="4"/></g>
<clipPath id="sl"><rect x="1156.7" y="1333" width="1916.8" height="58"/></clipPath>
<clipPath id="sr"><path d="M1156.7 1333 H563 a6 6 0 0 0 -6 6 V1385 a6 6 0 0 0 6 6 H1156.7 Z"/></clipPath>
<rect x="1156.7" y="1333" width="1916.8" height="58" fill="#e2eafc"/>
<g clip-path="url(#sr)"><path d="M557 1353.9 L576.2 1343.9 L595.5 1376.5 L614.7 1378.1 L633.9 1379 L653.1 1378.6 L672.4 1366.2 L691.6 1377.1 L710.8 1378.3 L730.1 1378.7 L749.3 1377.6 L768.5 1378.8 L787.7 1377.9 L807 1378.2 L826.2 1378.8 L845.4 1377.9 L864.7 1378.9 L883.9 1378.1 L903.1 1378.8 L922.4 1378.8 L941.6 1378.1 L960.8 1377.3 L980 1378.7 L999.3 1378.5 L1018.5 1377.7 L1037.7 1377 L1057 1377.8 L1076.2 1378.2 L1095.4 1377 L1114.6 1378.9 L1133.9 1377.2 L1153.1 1376.6 L1172.3 1376.7 L1191.6 1377.6 L1210.8 1378.4 L1230 1378.2 L1249.2 1377.5 L1268.5 1378.9 L1287.7 1377.4 L1306.9 1377.7 L1326.2 1378.8 L1345.4 1378.8 L1364.6 1378.4 L1383.8 1378.5 L1403.1 1376.7 L1422.3 1378.7 L1441.5 1377.9 L1460.8 1379 L1480 1377.7 L1499.2 1379.1 L1518.5 1378 L1537.7 1379.2 L1556.9 1379.2 L1576.1 1378.8 L1595.4 1377.8 L1614.6 1379 L1633.8 1378.8 L1653.1 1379.1 L1672.3 1377.2 L1691.5 1378.3 L1710.7 1378.3 L1730 1378.3 L1749.2 1377.5 L1768.4 1379.3 L1787.7 1378.3 L1806.9 1378.6 L1826.1 1368.2 L1845.3 1379.1 L1864.6 1377.8 L1883.8 1378.9 L1903 1379 L1922.3 1378.1 L1941.5 1379.7 L1960.7 1379.5 L1979.9 1378.7 L1999.2 1379.4 L2018.4 1378.4 L2037.6 1379 L2056.9 1378.7 L2076.1 1379.4 L2095.3 1377.2 L2114.5 1376.9 L2133.8 1378.8 L2153 1378.8 L2172.2 1377.2 L2191.5 1379.4 L2210.7 1375.1 L2229.9 1378.1 L2249.2 1377.9 L2268.4 1378.2 L2287.6 1379.1 L2306.8 1378.5 L2326.1 1378 L2345.3 1379.4 L2364.5 1379.7 L2383.8 1378.8 L2403 1379.8 L2422.2 1379.1 L2441.4 1378.8 L2460.7 1379.2 L2479.9 1379.3 L2499.1 1379.5 L2518.4 1379.3 L2537.6 1378.6 L2556.8 1378.5 L2576 1378.9 L2595.3 1378.5 L2614.5 1377.9 L2633.7 1379.8 L2653 1379.7 L2672.2 1378.9 L2691.4 1379.9 L2710.6 1379.8 L2729.9 1379.6 L2749.1 1379.4 L2768.3 1378.6 L2787.6 1378.2 L2806.8 1379.5 L2826 1379.7 L2845.3 1379.8 L2864.5 1378.9 L2883.7 1378.4 L2902.9 1379.6 L2922.2 1378.6 L2941.4 1378.3 L2960.6 1378.7 L2979.9 1379.1 L2999.1 1377.2 L3018.3 1377.7 L3037.5 1374.3 L3056.8 1374.7 L3076 1378.8 L3076 1391 L557 1391 Z" fill="#f1f3f9"/><path d="M557 1353.9 L576.2 1343.9 L595.5 1376.5 L614.7 1378.1 L633.9 1379 L653.1 1378.6 L672.4 1366.2 L691.6 1377.1 L710.8 1378.3 L730.1 1378.7 L749.3 1377.6 L768.5 1378.8 L787.7 1377.9 L807 1378.2 L826.2 1378.8 L845.4 1377.9 L864.7 1378.9 L883.9 1378.1 L903.1 1378.8 L922.4 1378.8 L941.6 1378.1 L960.8 1377.3 L980 1378.7 L999.3 1378.5 L1018.5 1377.7 L1037.7 1377 L1057 1377.8 L1076.2 1378.2 L1095.4 1377 L1114.6 1378.9 L1133.9 1377.2 L1153.1 1376.6 L1172.3 1376.7 L1191.6 1377.6 L1210.8 1378.4 L1230 1378.2 L1249.2 1377.5 L1268.5 1378.9 L1287.7 1377.4 L1306.9 1377.7 L1326.2 1378.8 L1345.4 1378.8 L1364.6 1378.4 L1383.8 1378.5 L1403.1 1376.7 L1422.3 1378.7 L1441.5 1377.9 L1460.8 1379 L1480 1377.7 L1499.2 1379.1 L1518.5 1378 L1537.7 1379.2 L1556.9 1379.2 L1576.1 1378.8 L1595.4 1377.8 L1614.6 1379 L1633.8 1378.8 L1653.1 1379.1 L1672.3 1377.2 L1691.5 1378.3 L1710.7 1378.3 L1730 1378.3 L1749.2 1377.5 L1768.4 1379.3 L1787.7 1378.3 L1806.9 1378.6 L1826.1 1368.2 L1845.3 1379.1 L1864.6 1377.8 L1883.8 1378.9 L1903 1379 L1922.3 1378.1 L1941.5 1379.7 L1960.7 1379.5 L1979.9 1378.7 L1999.2 1379.4 L2018.4 1378.4 L2037.6 1379 L2056.9 1378.7 L2076.1 1379.4 L2095.3 1377.2 L2114.5 1376.9 L2133.8 1378.8 L2153 1378.8 L2172.2 1377.2 L2191.5 1379.4 L2210.7 1375.1 L2229.9 1378.1 L2249.2 1377.9 L2268.4 1378.2 L2287.6 1379.1 L2306.8 1378.5 L2326.1 1378 L2345.3 1379.4 L2364.5 1379.7 L2383.8 1378.8 L2403 1379.8 L2422.2 1379.1 L2441.4 1378.8 L2460.7 1379.2 L2479.9 1379.3 L2499.1 1379.5 L2518.4 1379.3 L2537.6 1378.6 L2556.8 1378.5 L2576 1378.9 L2595.3 1378.5 L2614.5 1377.9 L2633.7 1379.8 L2653 1379.7 L2672.2 1378.9 L2691.4 1379.9 L2710.6 1379.8 L2729.9 1379.6 L2749.1 1379.4 L2768.3 1378.6 L2787.6 1378.2 L2806.8 1379.5 L2826 1379.7 L2845.3 1379.8 L2864.5 1378.9 L2883.7 1378.4 L2902.9 1379.6 L2922.2 1378.6 L2941.4 1378.3 L2960.6 1378.7 L2979.9 1379.1 L2999.1 1377.2 L3018.3 1377.7 L3037.5 1374.3 L3056.8 1374.7 L3076 1378.8" fill="none" stroke="#d2dbee" stroke-width="1.2"/></g>
<g clip-path="url(#sl)"><path d="M557 1353.9 L576.2 1343.9 L595.5 1376.5 L614.7 1378.1 L633.9 1379 L653.1 1378.6 L672.4 1366.2 L691.6 1377.1 L710.8 1378.3 L730.1 1378.7 L749.3 1377.6 L768.5 1378.8 L787.7 1377.9 L807 1378.2 L826.2 1378.8 L845.4 1377.9 L864.7 1378.9 L883.9 1378.1 L903.1 1378.8 L922.4 1378.8 L941.6 1378.1 L960.8 1377.3 L980 1378.7 L999.3 1378.5 L1018.5 1377.7 L1037.7 1377 L1057 1377.8 L1076.2 1378.2 L1095.4 1377 L1114.6 1378.9 L1133.9 1377.2 L1153.1 1376.6 L1172.3 1376.7 L1191.6 1377.6 L1210.8 1378.4 L1230 1378.2 L1249.2 1377.5 L1268.5 1378.9 L1287.7 1377.4 L1306.9 1377.7 L1326.2 1378.8 L1345.4 1378.8 L1364.6 1378.4 L1383.8 1378.5 L1403.1 1376.7 L1422.3 1378.7 L1441.5 1377.9 L1460.8 1379 L1480 1377.7 L1499.2 1379.1 L1518.5 1378 L1537.7 1379.2 L1556.9 1379.2 L1576.1 1378.8 L1595.4 1377.8 L1614.6 1379 L1633.8 1378.8 L1653.1 1379.1 L1672.3 1377.2 L1691.5 1378.3 L1710.7 1378.3 L1730 1378.3 L1749.2 1377.5 L1768.4 1379.3 L1787.7 1378.3 L1806.9 1378.6 L1826.1 1368.2 L1845.3 1379.1 L1864.6 1377.8 L1883.8 1378.9 L1903 1379 L1922.3 1378.1 L1941.5 1379.7 L1960.7 1379.5 L1979.9 1378.7 L1999.2 1379.4 L2018.4 1378.4 L2037.6 1379 L2056.9 1378.7 L2076.1 1379.4 L2095.3 1377.2 L2114.5 1376.9 L2133.8 1378.8 L2153 1378.8 L2172.2 1377.2 L2191.5 1379.4 L2210.7 1375.1 L2229.9 1378.1 L2249.2 1377.9 L2268.4 1378.2 L2287.6 1379.1 L2306.8 1378.5 L2326.1 1378 L2345.3 1379.4 L2364.5 1379.7 L2383.8 1378.8 L2403 1379.8 L2422.2 1379.1 L2441.4 1378.8 L2460.7 1379.2 L2479.9 1379.3 L2499.1 1379.5 L2518.4 1379.3 L2537.6 1378.6 L2556.8 1378.5 L2576 1378.9 L2595.3 1378.5 L2614.5 1377.9 L2633.7 1379.8 L2653 1379.7 L2672.2 1378.9 L2691.4 1379.9 L2710.6 1379.8 L2729.9 1379.6 L2749.1 1379.4 L2768.3 1378.6 L2787.6 1378.2 L2806.8 1379.5 L2826 1379.7 L2845.3 1379.8 L2864.5 1378.9 L2883.7 1378.4 L2902.9 1379.6 L2922.2 1378.6 L2941.4 1378.3 L2960.6 1378.7 L2979.9 1379.1 L2999.1 1377.2 L3018.3 1377.7 L3037.5 1374.3 L3056.8 1374.7 L3076 1378.8 L3076 1391 L557 1391 Z" fill="#d1dcf7"/><path d="M557 1353.9 L576.2 1343.9 L595.5 1376.5 L614.7 1378.1 L633.9 1379 L653.1 1378.6 L672.4 1366.2 L691.6 1377.1 L710.8 1378.3 L730.1 1378.7 L749.3 1377.6 L768.5 1378.8 L787.7 1377.9 L807 1378.2 L826.2 1378.8 L845.4 1377.9 L864.7 1378.9 L883.9 1378.1 L903.1 1378.8 L922.4 1378.8 L941.6 1378.1 L960.8 1377.3 L980 1378.7 L999.3 1378.5 L1018.5 1377.7 L1037.7 1377 L1057 1377.8 L1076.2 1378.2 L1095.4 1377 L1114.6 1378.9 L1133.9 1377.2 L1153.1 1376.6 L1172.3 1376.7 L1191.6 1377.6 L1210.8 1378.4 L1230 1378.2 L1249.2 1377.5 L1268.5 1378.9 L1287.7 1377.4 L1306.9 1377.7 L1326.2 1378.8 L1345.4 1378.8 L1364.6 1378.4 L1383.8 1378.5 L1403.1 1376.7 L1422.3 1378.7 L1441.5 1377.9 L1460.8 1379 L1480 1377.7 L1499.2 1379.1 L1518.5 1378 L1537.7 1379.2 L1556.9 1379.2 L1576.1 1378.8 L1595.4 1377.8 L1614.6 1379 L1633.8 1378.8 L1653.1 1379.1 L1672.3 1377.2 L1691.5 1378.3 L1710.7 1378.3 L1730 1378.3 L1749.2 1377.5 L1768.4 1379.3 L1787.7 1378.3 L1806.9 1378.6 L1826.1 1368.2 L1845.3 1379.1 L1864.6 1377.8 L1883.8 1378.9 L1903 1379 L1922.3 1378.1 L1941.5 1379.7 L1960.7 1379.5 L1979.9 1378.7 L1999.2 1379.4 L2018.4 1378.4 L2037.6 1379 L2056.9 1378.7 L2076.1 1379.4 L2095.3 1377.2 L2114.5 1376.9 L2133.8 1378.8 L2153 1378.8 L2172.2 1377.2 L2191.5 1379.4 L2210.7 1375.1 L2229.9 1378.1 L2249.2 1377.9 L2268.4 1378.2 L2287.6 1379.1 L2306.8 1378.5 L2326.1 1378 L2345.3 1379.4 L2364.5 1379.7 L2383.8 1378.8 L2403 1379.8 L2422.2 1379.1 L2441.4 1378.8 L2460.7 1379.2 L2479.9 1379.3 L2499.1 1379.5 L2518.4 1379.3 L2537.6 1378.6 L2556.8 1378.5 L2576 1378.9 L2595.3 1378.5 L2614.5 1377.9 L2633.7 1379.8 L2653 1379.7 L2672.2 1378.9 L2691.4 1379.9 L2710.6 1379.8 L2729.9 1379.6 L2749.1 1379.4 L2768.3 1378.6 L2787.6 1378.2 L2806.8 1379.5 L2826 1379.7 L2845.3 1379.8 L2864.5 1378.9 L2883.7 1378.4 L2902.9 1379.6 L2922.2 1378.6 L2941.4 1378.3 L2960.6 1378.7 L2979.9 1379.1 L2999.1 1377.2 L3018.3 1377.7 L3037.5 1374.3 L3056.8 1374.7 L3076 1378.8" fill="none" stroke="#8fb0f7" stroke-width="1.2"/></g>
<rect x="557" y="1333" width="2519" height="58" rx="6" fill="none" stroke="#d2dbee" stroke-width="2"/>
<path d="M1155.7 1333 V1313 a4 4 0 0 1 4 -4 H3070.5 a4 4 0 0 1 4 4 V1333 Z" fill="#dee4f2"/>
<rect x="2106.1" y="1315.6" width="4" height="10.7" rx="2" fill="#fff"/>
<rect x="2113.1" y="1315.6" width="4" height="10.7" rx="2" fill="#fff"/>
<rect x="2120.1" y="1315.6" width="4" height="10.7" rx="2" fill="#fff"/>
<rect x="1155.7" y="1333" width="2" height="58" fill="#acb8d1"/>
<rect x="1151.2" y="1344" width="11" height="36" rx="3.5" fill="#fff" stroke="#acb8d1" stroke-width="2"/>
<rect x="3072.5" y="1333" width="2" height="58" fill="#acb8d1"/>
<rect x="3068" y="1344" width="11" height="36" rx="3.5" fill="#fff" stroke="#acb8d1" stroke-width="2"/>
</svg>
</body></html>
